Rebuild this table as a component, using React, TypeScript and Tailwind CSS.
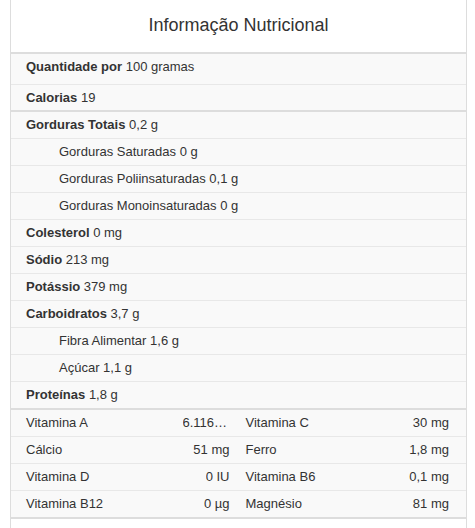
const font = { fontFamily: '"Liberation Sans", Arial, Helvetica, sans-serif' };

type Row = { label: string; value: string; indent?: boolean };

const nutrients: Row[] = [
  { label: "Gorduras Totais", value: "0,2 g" },
  { label: "Gorduras Saturadas", value: "0 g", indent: true },
  { label: "Gorduras Poliinsaturadas", value: "0,1 g", indent: true },
  { label: "Gorduras Monoinsaturadas", value: "0 g", indent: true },
  { label: "Colesterol", value: "0 mg" },
  { label: "Sódio", value: "213 mg" },
  { label: "Potássio", value: "379 mg" },
  { label: "Carboidratos", value: "3,7 g" },
  { label: "Fibra Alimentar", value: "1,6 g", indent: true },
  { label: "Açúcar", value: "1,1 g", indent: true },
  { label: "Proteínas", value: "1,8 g" },
];

const vitamins: [string, string, string, string][] = [
  ["Vitamina A", "6.116 IU", "Vitamina C", "30 mg"],
  ["Cálcio", "51 mg", "Ferro", "1,8 mg"],
  ["Vitamina D", "0 IU", "Vitamina B6", "0,1 mg"],
  ["Vitamina B12", "0 µg", "Magnésio", "81 mg"],
];

export default function App() {
  return (
    <div className="min-h-screen bg-white pl-[10px] text-[13px] text-[#333]" style={font}>
      <div className="w-[457px] border-x border-[#dddddd]">
        <div className="flex h-[54px] items-center justify-center border-b-2 border-[#dddddd] pb-[2px] text-[18px]">
          Informação Nutricional
        </div>

        <div className="bg-[#f9f9f9]">
          <div className="flex h-[31px] items-center border-b border-[#e8e8e8] pb-[4px] pl-[15px]">
            <span className="font-bold">Quantidade por</span>&nbsp;100 gramas
          </div>
          <div className="flex h-[27px] items-center border-b-2 border-[#dddddd] pl-[15px]">
            <span className="font-bold">Calorias</span>&nbsp;19
          </div>

          {nutrients.map((n, i) => (
            <div
              key={n.label}
              className={`flex items-center ${
                i === nutrients.length - 1 ? "h-[28px] border-b-2 border-[#dddddd]" : "h-[27px] border-b border-[#e8e8e8]"
              } ${n.indent ? "pl-[48px]" : "pl-[15px]"}`}
            >
              <span className={n.indent ? "" : "font-bold"}>{n.label}</span>&nbsp;{n.value}
            </div>
          ))}

          {vitamins.map((v, i) => (
            <div
              key={v[0]}
              className={`grid grid-cols-2 items-center gap-x-4 pl-[15px] pr-[17px] ${
                i === vitamins.length - 1 ? "h-[28px] border-b-2 border-[#dddddd]" : "h-[27px] border-b border-[#e8e8e8]"
              }`}
            >
              <div className="flex justify-between">
                <span>{v[0]}</span>
                <span className="max-w-[47px] truncate text-right">{v[1]}</span>
              </div>
              <div className="flex justify-between">
                <span>{v[2]}</span>
                <span>{v[3]}</span>
              </div>
            </div>
          ))}
        </div>

        <div className="h-[20px] bg-white" />
      </div>
    </div>
  );
}
